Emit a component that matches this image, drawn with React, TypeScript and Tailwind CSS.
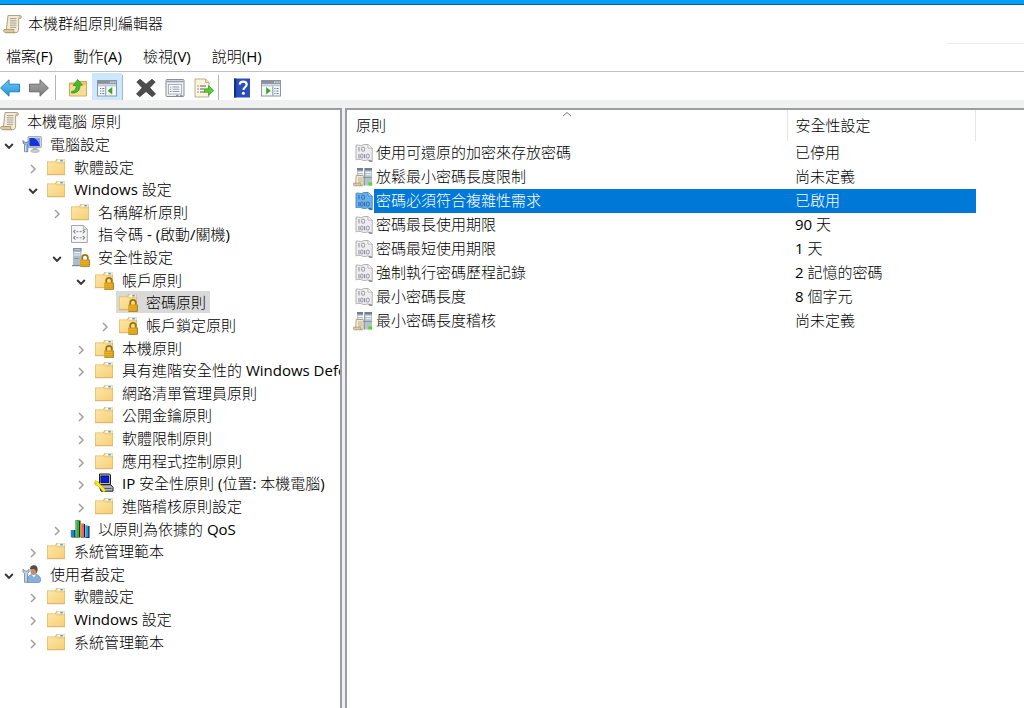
import type { ReactNode } from 'react';

type IconName =
  | 'scroll'
  | 'computer'
  | 'folder'
  | 'script'
  | 'server'
  | 'folderLock'
  | 'ipsec'
  | 'qos'
  | 'user'
  | 'binary'
  | 'binarySelected'
  | 'policy';

type TreeItem = {
  label: string;
  depth: number;
  icon: IconName;
  state?: 'open' | 'closed';
  selected?: boolean;
};

const treeItems: TreeItem[] = [
  { label: '本機電腦 原則', depth: 0, icon: 'scroll' },
  { label: '電腦設定', depth: 1, icon: 'computer', state: 'open' },
  { label: '軟體設定', depth: 2, icon: 'folder', state: 'closed' },
  { label: 'Windows 設定', depth: 2, icon: 'folder', state: 'open' },
  { label: '名稱解析原則', depth: 3, icon: 'folder', state: 'closed' },
  { label: '指令碼 - (啟動/關機)', depth: 3, icon: 'script' },
  { label: '安全性設定', depth: 3, icon: 'server', state: 'open' },
  { label: '帳戶原則', depth: 4, icon: 'folderLock', state: 'open' },
  { label: '密碼原則', depth: 5, icon: 'folderLock', selected: true },
  { label: '帳戶鎖定原則', depth: 5, icon: 'folderLock', state: 'closed' },
  { label: '本機原則', depth: 4, icon: 'folderLock', state: 'closed' },
  { label: '具有進階安全性的 Windows Defender', depth: 4, icon: 'folder', state: 'closed' },
  { label: '網路清單管理員原則', depth: 4, icon: 'folder' },
  { label: '公開金鑰原則', depth: 4, icon: 'folder', state: 'closed' },
  { label: '軟體限制原則', depth: 4, icon: 'folder', state: 'closed' },
  { label: '應用程式控制原則', depth: 4, icon: 'folder', state: 'closed' },
  { label: 'IP 安全性原則 (位置: 本機電腦)', depth: 4, icon: 'ipsec', state: 'closed' },
  { label: '進階稽核原則設定', depth: 4, icon: 'folder', state: 'closed' },
  { label: '以原則為依據的 QoS', depth: 3, icon: 'qos', state: 'closed' },
  { label: '系統管理範本', depth: 2, icon: 'folder', state: 'closed' },
  { label: '使用者設定', depth: 1, icon: 'user', state: 'open' },
  { label: '軟體設定', depth: 2, icon: 'folder', state: 'closed' },
  { label: 'Windows 設定', depth: 2, icon: 'folder', state: 'closed' },
  { label: '系統管理範本', depth: 2, icon: 'folder', state: 'closed' },
];

const policies: { name: string; value: string; icon: IconName; selected?: boolean }[] = [
  { name: '使用可還原的加密來存放密碼', value: '已停用', icon: 'binary' },
  { name: '放鬆最小密碼長度限制', value: '尚未定義', icon: 'policy' },
  { name: '密碼必須符合複雜性需求', value: '已啟用', icon: 'binarySelected', selected: true },
  { name: '密碼最長使用期限', value: '90 天', icon: 'binary' },
  { name: '密碼最短使用期限', value: '1 天', icon: 'binary' },
  { name: '強制執行密碼歷程記錄', value: '2 記憶的密碼', icon: 'binary' },
  { name: '最小密碼長度', value: '8 個字元', icon: 'binary' },
  { name: '最小密碼長度稽核', value: '尚未定義', icon: 'policy' },
];

const menus = ['檔案(F)', '動作(A)', '檢視(V)', '說明(H)'];

const indents = ['pl-0', 'pl-0', 'pl-6', 'pl-12', 'pl-[72px]', 'pl-24'];

// Latin runs are one step heavier than the CJK text around them.
function Label({ text }: { text: string }) {
  return (
    <span className="whitespace-pre">
      {text.split(/([\x20-\x7e]+)/).map((part, index) =>
        index % 2 === 1 ? (
          <span key={index} className="font-normal">
            {part}
          </span>
        ) : (
          part
        ),
      )}
    </span>
  );
}

function Svg({ children }: { children: ReactNode }) {
  return (
    <svg viewBox="0 0 20 20" className="size-5 shrink-0" aria-hidden="true">
      {children}
    </svg>
  );
}

function FolderShape() {
  return (
    <>
      <path d="M1 4.5h8l1.500-2.500h8v3h.5v12.500H1z" fill="#dfb75c" />
      <path d="M10 5 11.300 2.300h6.700V5.500H10z" fill="#f4e3b4" />
      <rect x="12" y="2.800" width="5.400" height="1.900" fill="#fdfdf8" />
      <rect x="14.200" y="2.900" width="2.600" height="1.600" fill="#4aa3e0" />
      <path d="M1.600 5.200h8.200l.9 1h7.700V17H1.600z" fill="url(#folderFill)" />
      <path d="M1 17.700h18" stroke="#d6ad55" strokeWidth="0.900" />
    </>
  );
}

function LockShape() {
  return (
    <>
      <path d="M12.200 13v-2.400a2.800 2.800 0 0 1 5.600 0V13" fill="none" stroke="#9c7414" strokeWidth="1.800" />
      <rect x="10.200" y="12.400" width="9.600" height="7.200" rx="0.800" fill="#d79a12" />
      <path d="M10.600 14.400h8.800M10.600 16.300h8.800M10.600 18.200h8.800" stroke="#f2c445" strokeWidth="0.700" />
      <path d="M19.400 12.600v6.800h-9" fill="none" stroke="#9a6c0a" strokeWidth="0.700" />
    </>
  );
}

function ScrollShape() {
  return (
    <>
      <path d="M5 1.500h11.800c1.800 0 2.200 2 .8 3.100h-2V15c0 2.600-1 3.600-2.800 3.600H3z" fill="#f3ead2" stroke="#a59a80" strokeWidth="0.900" />
      <path d="M15.600 4.600V3c0-1.200 2.600-1.600 2.800.3 0 1-.8 1.400-2.800 1.300z" fill="#cfc19b" />
      <path d="M7 4.600h6.400M7 6.800h6.400M7 9h6.400M7 11.200h6.400M7 13.400h6" stroke="#a3a29c" strokeWidth="1" />
      <path d="M1 15.500h10c-.8 1.400-.2 3 1 3.200H2.600C.8 18.600.2 16.800 1 15.500z" fill="#d9caa2" stroke="#a08f68" strokeWidth="0.800" />
    </>
  );
}

function BinaryShape({ selected }: { selected?: boolean }) {
  const ink = selected ? '#2467a8' : '#8d8b9c';
  const edge = selected ? '#3f86c8' : '#a9a9ad';
  return (
    <g transform="translate(1 0)">
      <path
        d="M2 2.500c2-1.400 4 .6 6 0l1.500-1H14l4.200 3.400v13.600h-3l-1.700-1.700c-2 1-4 1-6 0-1.700-.8-3.800-.4-5.500 0z"
        fill={selected ? '#6cb0ea' : '#eeeef0'}
        stroke={edge}
        strokeWidth="0.900"
      />
      <path d="M14 1.600v3.600h4.200" fill={selected ? '#9acbf2' : '#fff'} stroke={edge} strokeWidth="0.800" />
      <path d="M5 4v4.400M5 11v4.400M10.600 11v4.400" stroke={ink} strokeWidth="1" />
      <rect x="7.600" y="4.200" width="3" height="4" rx="1.200" fill="none" stroke={ink} strokeWidth="0.900" />
      <rect x="6.600" y="11.100" width="2.400" height="4" rx="1.100" fill="none" stroke={ink} strokeWidth="0.900" />
      <rect x="12.400" y="11.100" width="2.800" height="4" rx="1.200" fill="none" stroke={ink} strokeWidth="0.900" />
      <path d="M14.600 17 18.200 18.600" stroke={selected ? '#2467a8' : '#85858a'} strokeWidth="1.300" />
    </g>
  );
}

function Icon({ name }: { name: IconName }) {
  switch (name) {
    case 'folder':
      return (
        <Svg>
          <FolderShape />
        </Svg>
      );
    case 'folderLock':
      return (
        <Svg>
          <FolderShape />
          <LockShape />
        </Svg>
      );
    case 'scroll':
      return (
        <Svg>
          <ScrollShape />
        </Svg>
      );
    case 'computer':
      return (
        <Svg>
          <rect x="6" y="2.600" width="13.400" height="11" rx="0.600" fill="#d9dde2" stroke="#8f959d" strokeWidth="0.800" />
          <rect x="7.400" y="4" width="10.600" height="8.200" fill="#1533d6" />
          <path d="M12 4h6v8.200c-1-4-3-6.600-6-8.200z" fill="#7fa4f5" />
          <path d="M11 13.800h4l.8 2.600h-5.600z" fill="#b4b9c0" />
          <ellipse cx="13" cy="17" rx="4.400" ry="1.400" fill="#cfd3d8" stroke="#8f959d" strokeWidth="0.600" />
          <path d="M1 6.500v2.600l1.600 1.400v7.200h3.200v-7.200l1.400-1.400V6.500l-1.700 1.800H2.800z" fill="#8fb4d4" stroke="#54779a" strokeWidth="0.800" />
          <path d="M3.600 11v6.500" stroke="#dcecf8" strokeWidth="0.900" />
        </Svg>
      );
    case 'script':
      return (
        <Svg>
          <path d="M1.500 1.500h12l3.800 3.800v13.200H1.500z" fill="#f5f6f8" stroke="#a2a6ad" strokeWidth="1" />
          <path d="M13.300 1.500v4h4" fill="#dfe2e7" stroke="#a2a6ad" strokeWidth="0.800" />
          <path d="M5.400 5.800 3.600 7.600l1.800 1.800M12.800 5.800l1.800 1.800-1.800 1.800M5.400 12 3.600 13.800l1.800 1.800M12.800 12l1.800 1.800-1.800 1.800" fill="none" stroke="#7e858f" strokeWidth="1.100" />
          <path d="M6.400 7.600h2M9.700 7.600h2M6.400 13.800h2M9.700 13.800h2" stroke="#7e858f" strokeWidth="1" />
        </Svg>
      );
    case 'server':
      return (
        <Svg>
          <path d="M3 1h8.500v17.500H3z" fill="#aebdca" />
          <path d="M3 1h8.500v3.200H3z" fill="#7f92a3" />
          <path d="M4.200 5.600h6M4.200 8h6" stroke="#eef3f7" strokeWidth="1.200" />
          <path d="M4.200 2.800h6" stroke="#d7e1e9" strokeWidth="0.900" />
          <path d="M4.200 11.500h5" stroke="#7b8c9c" strokeWidth="0.800" />
          <path d="M2 18.600h9" stroke="#788896" strokeWidth="1.200" />
          <LockShape />
        </Svg>
      );
    case 'ipsec':
      return (
        <Svg>
          <path d="M5.500 1h10l1 1v9.500h-11z" fill="#b9bcc2" stroke="#1b1b24" strokeWidth="1" />
          <rect x="7" y="3" width="7.600" height="6.400" fill="#0a1fe0" stroke="#0b0b3a" strokeWidth="0.900" />
          <path d="M5 11.800h11.800l2.200 2.600v3.800H7z" fill="#b4b6bb" stroke="#1b1b24" strokeWidth="1" />
          <path d="M10 15.400h7.500" stroke="#4b4d55" strokeWidth="1" />
          <path d="M1 7.600 4.600 9l.8 1.600 6.400 6.600-2 2-6-6.400-2-.4L0 9.600l2.200 1.200z" fill="#ffee12" stroke="#b8a300" strokeWidth="0.500" />
        </Svg>
      );
    case 'qos':
      return (
        <Svg>
          <path d="M1.500 11h4.500v7.500H1.500zM6 1.500h4.500v17H6zM11 5h4v13.500h-4zM15.500 7h4v12h-4z" fill="#0b1c2b" />
          <rect x="0.800" y="11" width="3.600" height="7" fill="#1f83d6" />
          <rect x="5.200" y="1" width="4" height="17" fill="#35b03a" />
          <rect x="10.400" y="4.500" width="3.600" height="13.500" fill="#ea6a3e" />
          <rect x="15" y="6.500" width="3.400" height="11.800" fill="#2a9be6" />
          <path d="M6 1.500v16M11 5v12.500M15.600 7v11" stroke="#fff" strokeOpacity="0.400" strokeWidth="0.900" />
        </Svg>
      );
    case 'user':
      return (
        <Svg>
          <path d="M5.500 18.500c-1-5 1.500-8 5.500-8.200 4.500-.2 7.500 1.700 7.700 6 0 1.500-1 2.200-2.200 2.200z" fill="#86afd9" stroke="#5f8bb8" strokeWidth="0.700" />
          <path d="M9.500 10.500 12 13.500l2-3z" fill="#f2f6fa" />
          <ellipse cx="11.600" cy="6.800" rx="3.200" ry="4" fill="#c08f6a" />
          <path d="M8 5.500C8 2.300 9.800 1.300 12 1.300c2.400 0 3.900 1.700 3.600 5-.2 1.500-.8 2.700-1.400 3.200.2-2.600-.6-4.200-2.400-4.400-1.500-.1-2.800-.1-3.800.4z" fill="#5a4c40" />
          <path d="M1 5.200v2.600l1.500 1.500v9h3v-9L7 7.800V5.200L5.500 7H2.600z" fill="#c3d3e2" stroke="#68829b" strokeWidth="0.800" />
        </Svg>
      );
    case 'policy':
      return (
        <Svg>
          <path d="M4 1h6v14H4zM11.500 1h7.500v17.500h-7.500z" fill="#b5c1cc" />
          <path d="M4 1h6v2.600H4zM11.500 1h7.500v2.600h-7.500z" fill="#72808d" />
          <path d="M5 5.400h5M12.500 5.400h5.500M12.500 7.700h5.500M5 7.700h5" stroke="#f3f6f8" strokeWidth="1.100" />
          <path d="M11.500 3.600v15M10 10.500h9" stroke="#7b8995" strokeWidth="0.800" />
          <path d="M3.200 8.500h7v9.700H2.500z" fill="#f4ead0" stroke="#a3956f" strokeWidth="0.800" />
          <path d="M5 11h4M5 13h4M5 15h4" stroke="#a9a182" strokeWidth="0.800" />
          <path d="M.5 16.200h7.300c-.5 1.200 0 2.500 1 2.600H1.500C.2 18.700.1 17 .5 16.200z" fill="#dccda3" stroke="#a08f68" strokeWidth="0.700" />
          <rect x="15.500" y="15.300" width="3.600" height="3.200" fill="#4fdc22" />
        </Svg>
      );
    case 'binary':
      return (
        <Svg>
          <BinaryShape />
        </Svg>
      );
    case 'binarySelected':
      return (
        <Svg>
          <BinaryShape selected />
        </Svg>
      );
  }
}

function ToolButton({ label, active, children }: { label: string; active?: boolean; children: ReactNode }) {
  return (
    <button
      type="button"
      aria-label={label}
      className={`flex h-[27px] items-center justify-center pt-0.5 ${active ? 'w-[30px] bg-[#cce8ff]' : 'w-[29px]'}`}
    >
      <svg viewBox="0 0 20 20" className="size-5" aria-hidden="true">
        {children}
      </svg>
    </button>
  );
}

function PaneWindow({ side }: { side: 'left' | 'right' }) {
  return (
    <>
      <rect x="0.500" y="2.500" width="19" height="15.500" fill="#f7f8fa" stroke="#8d96a2" />
      <rect x="0.500" y="2.500" width="19" height="3.400" fill="#8791a0" />
      <path d="M13 4.200h1.500M15.300 4.200h1.500M17.500 4.200h1.300" stroke="#e9edf2" strokeWidth="1.200" />
      <rect x="1" y="6.300" width="18" height="2" fill="#c4cad2" />
      {side === 'left' ? (
        <>
          <path d="M8.700 8.300V18" stroke="#9aa3af" strokeWidth="1.200" />
          <path d="M3 10.500h1.300M5.300 10.500h2M3 13h1.300M5.300 13h2M3 15.500h1.300M5.300 15.500h2" stroke="#4a88b8" strokeWidth="1.100" />
          <path d="M15 9.500v6.600l-4-3.300z" fill="#39a51f" stroke="#39a51f" strokeWidth="0.500" />
        </>
      ) : (
        <>
          <path d="M11.800 8.300V18" stroke="#9aa3af" strokeWidth="1.200" />
          <path d="M13.300 10.500h1.200M15.500 10.500h2M13.300 13h1.200M15.500 13h2M13.300 15.500h1.200M15.500 15.500h2" stroke="#4a88b8" strokeWidth="1.100" />
          <path d="M5.400 9.500v6.600l4-3.300z" fill="#39a51f" stroke="#39a51f" strokeWidth="0.500" />
        </>
      )}
    </>
  );
}

function Separator() {
  return <div className="h-[25px] w-px bg-[#b4b4b4]" />;
}

function Toolbar() {
  return (
    <div role="toolbar" aria-label="工具列" className="flex h-7 items-end">
      <div className="-ml-[5px] mr-0.5 flex">
        <ToolButton label="上一頁">
          <path d="M.6 10 9 1.800v4.400h10.500v7.600H9v4.400z" fill="url(#backFill)" stroke="#2a7fb8" strokeWidth="1" strokeLinejoin="round" />
        </ToolButton>
        <ToolButton label="下一頁">
          <path d="M19.400 10 11 1.800v4.400H.5v7.600H11v4.400z" fill="url(#nextFill)" stroke="#6b6b6b" strokeWidth="1" strokeLinejoin="round" />
        </ToolButton>
      </div>
      <Separator />
      <div className="ml-[7px] flex">
        <ToolButton label="上一層">
          <path d="M1.500 5h7l1.500-1.500h8.500v14.500h-17z" fill="#ecc670" stroke="#c79a40" strokeWidth="0.800" />
          <path d="M2 7h16v10.500H2z" fill="#f7dc94" />
          <path d="M3.500 13.500c3.500-.5 5-3 4.600-6H5L9.700 1.500l4.800 5.700h-2.600c.5 5-2.700 8.300-8.400 7.800z" fill="#45bb2c" stroke="#2a8c1a" strokeWidth="0.700" />
        </ToolButton>
        <ToolButton label="顯示/隱藏主控台樹狀目錄" active>
          <PaneWindow side="left" />
        </ToolButton>
      </div>
      <Separator />
      <div className="ml-2 flex">
        <ToolButton label="刪除">
          <path d="M.8 4 4 1.200l6 5L16 1.200 19.200 4l-5.400 5.800L19.500 16l-3.300 2.700-6.200-5.200-6.200 5.200L.5 16l5.700-6.200z" fill="#4d4d4d" stroke="#333" strokeWidth="0.700" strokeLinejoin="round" />
        </ToolButton>
        <ToolButton label="內容">
          <rect x="1" y="1.500" width="18" height="17" rx="1" fill="#eef0f3" stroke="#868f9b" />
          <path d="M1.500 3.500h17" stroke="#98a1ad" strokeWidth="1.600" />
          <rect x="3.500" y="6.500" width="13" height="9.500" fill="#fff" stroke="#98a1ad" strokeWidth="0.800" />
          <path d="M5 9h1.500M7.500 9h7M5 11.200h1.500M7.500 11.200h7M5 13.500h1.500M7.500 13.500h7" stroke="#7f97b4" strokeWidth="1" />
          <path d="M11 17.400h2.500M15 17.400h2.500" stroke="#868f9b" strokeWidth="1" />
        </ToolButton>
        <ToolButton label="匯出清單">
          <path d="M1 1h10.500l3.500 3.500V19H1z" fill="#fbf4dc" stroke="#b3a888" strokeWidth="0.900" />
          <path d="M11.500 1v3.500H15" fill="#e8dcb8" stroke="#b3a888" strokeWidth="0.800" />
          <path d="M3.500 8h1.200M6 8h6M3.500 11h1.200M6 11h4M3.500 14h1.200M6 14h5" stroke="#5c5c6a" strokeWidth="1" />
          <path d="M10.500 10.800h4V7.500l5.200 5-5.200 5v-3.200h-4z" fill="#58cc35" stroke="#35961c" strokeWidth="0.700" />
        </ToolButton>
      </div>
      <Separator />
      <div className="ml-2 flex">
        <ToolButton label="說明">
          <path d="M2 .5h16v19H2z" fill="#2a4fb8" />
          <path d="M2 .5h2.200v19H2z" fill="#16307f" />
          <path d="M7.600 6.600c.2-2 1.700-3 3.600-3s3.500 1.100 3.500 3c0 2.600-3.300 2.700-3.300 5.400" fill="none" stroke="#fff" strokeWidth="2.100" />
          <circle cx="11.400" cy="15.200" r="1.500" fill="#fff" />
        </ToolButton>
        <ToolButton label="顯示/隱藏執行窗格">
          <PaneWindow side="right" />
        </ToolButton>
      </div>
    </div>
  );
}

function Chevron({ open }: { open: boolean }) {
  return (
    <svg viewBox="0 0 12 12" className="mt-1 size-3" aria-hidden="true">
      {open ? (
        <path d="M2.200 4 6 7.800 9.800 4" fill="none" stroke="#333" strokeWidth="1.900" />
      ) : (
        <path d="M4 2 8 6 4 10" fill="none" stroke="#a0a0a0" strokeWidth="1.500" />
      )}
    </svg>
  );
}

function TreeRow({ item }: { item: TreeItem }) {
  return (
    <li
      role="treeitem"
      aria-level={item.depth + 1}
      aria-expanded={item.state ? item.state === 'open' : undefined}
      aria-selected={Boolean(item.selected)}
      className={`flex min-h-0 items-center ${indents[item.depth]}`}
    >
      {item.depth > 0 && (
        <span className="ml-[3px] mr-[5px] flex w-3 shrink-0 items-center">
          {item.state && (
            <button type="button" aria-label={item.state === 'open' ? '摺疊' : '展開'}>
              <Chevron open={item.state === 'open'} />
            </button>
          )}
        </span>
      )}
      <span
        className={`flex h-[22px] shrink-0 items-center whitespace-nowrap pr-1 ${item.depth > 0 ? 'gap-2 pl-0.5' : 'gap-[7px]'} ${
          item.selected ? 'bg-[#d9d9d9]' : ''
        }`}
      >
        <Icon name={item.icon} />
        <Label text={item.label} />
      </span>
    </li>
  );
}

function PolicyTable() {
  return (
    <table className="w-[629px] table-fixed border-collapse text-left">
      <colgroup>
        <col className="w-[440px]" />
        <col />
      </colgroup>
      <thead>
        <tr className="h-[31px]">
          <th className="relative border-r border-[#e5e5e5] pb-0.5 pl-[9px] font-light" aria-sort="ascending">
            原則
            <svg viewBox="0 0 10 6" className="absolute left-1/2 top-px h-1.5 w-2.5 -translate-x-1/2" aria-hidden="true">
              <path d="M1 5 5 1.500 9 5" fill="none" stroke="#7a7a7a" strokeWidth="1" />
            </svg>
          </th>
          <th className="border-r border-[#e5e5e5] pb-0.5 pl-2 font-light">安全性設定</th>
        </tr>
      </thead>
      <tbody>
        {policies.map((policy) => (
          <tr key={policy.name} aria-selected={Boolean(policy.selected)} className="h-6">
            <td className="p-0">
              <div className="flex h-6 items-center pl-1.5">
                <Icon name={policy.icon} />
                <span
                  className={`ml-px flex h-6 flex-1 items-center pb-0.5 pl-0.5 ${policy.selected ? 'bg-[#0078d7] text-white' : ''}`}
                >
                  <Label text={policy.name} />
                </span>
              </div>
            </td>
            <td className={`pb-0.5 pl-2 ${policy.selected ? 'bg-[#0078d7] text-white' : ''}`}>
              <Label text={policy.value} />
            </td>
          </tr>
        ))}
      </tbody>
    </table>
  );
}

export default function App() {
  return (
    <div className="flex min-h-screen flex-col bg-white font-['Open_Sans','Noto_Sans_CJK_TC',sans-serif] text-[15px] leading-[22px] font-light text-black">
      <svg className="absolute size-0" aria-hidden="true">
        <defs>
          <linearGradient id="folderFill" x1="0" y1="0" x2="1" y2="1">
            <stop offset="0" stopColor="#fde6a4" />
            <stop offset="1" stopColor="#f7d07a" />
          </linearGradient>
          <linearGradient id="backFill" x1="0" y1="0" x2="0" y2="1">
            <stop offset="0" stopColor="#6fc8f5" />
            <stop offset="1" stopColor="#1f95dc" />
          </linearGradient>
          <linearGradient id="nextFill" x1="0" y1="0" x2="0" y2="1">
            <stop offset="0" stopColor="#a9a9a9" />
            <stop offset="1" stopColor="#7c7c7c" />
          </linearGradient>
        </defs>
      </svg>

      <header>
        <div className="h-[5px] border-b border-[#0b5c94] bg-[#009ffb]" />
        <div className="flex h-[38px] items-center gap-[5px] pl-[3px]">
          <Icon name="scroll" />
          <h1 className="pb-0.5">本機群組原則編輯器</h1>
        </div>
        <div className="ml-auto h-px w-[78px] bg-[#ececec]" />
        <nav className="flex h-[27px] items-center gap-[21px] pb-1 pl-1.5">
          {menus.map((menu) => (
            <button key={menu} type="button">
              <Label text={menu} />
            </button>
          ))}
        </nav>
        <div className="border-t border-[#bfc2c6]">
          <Toolbar />
        </div>
      </header>

      <main className="flex flex-1 bg-[#f0f0f0] pt-2">
        <section className="w-[342px] shrink-0 overflow-hidden border-r-2 border-t-2 border-[#9a9da3] bg-white">
          <ul role="tree" aria-label="主控台樹狀目錄" className="grid h-[543px] auto-rows-fr">
            {treeItems.map((item, index) => (
              <TreeRow key={index} item={item} />
            ))}
          </ul>
        </section>
        <section className="ml-[3px] min-w-0 flex-1 border-l-2 border-t-2 border-[#9a9da3] bg-white">
          <PolicyTable />
        </section>
      </main>
    </div>
  );
}
